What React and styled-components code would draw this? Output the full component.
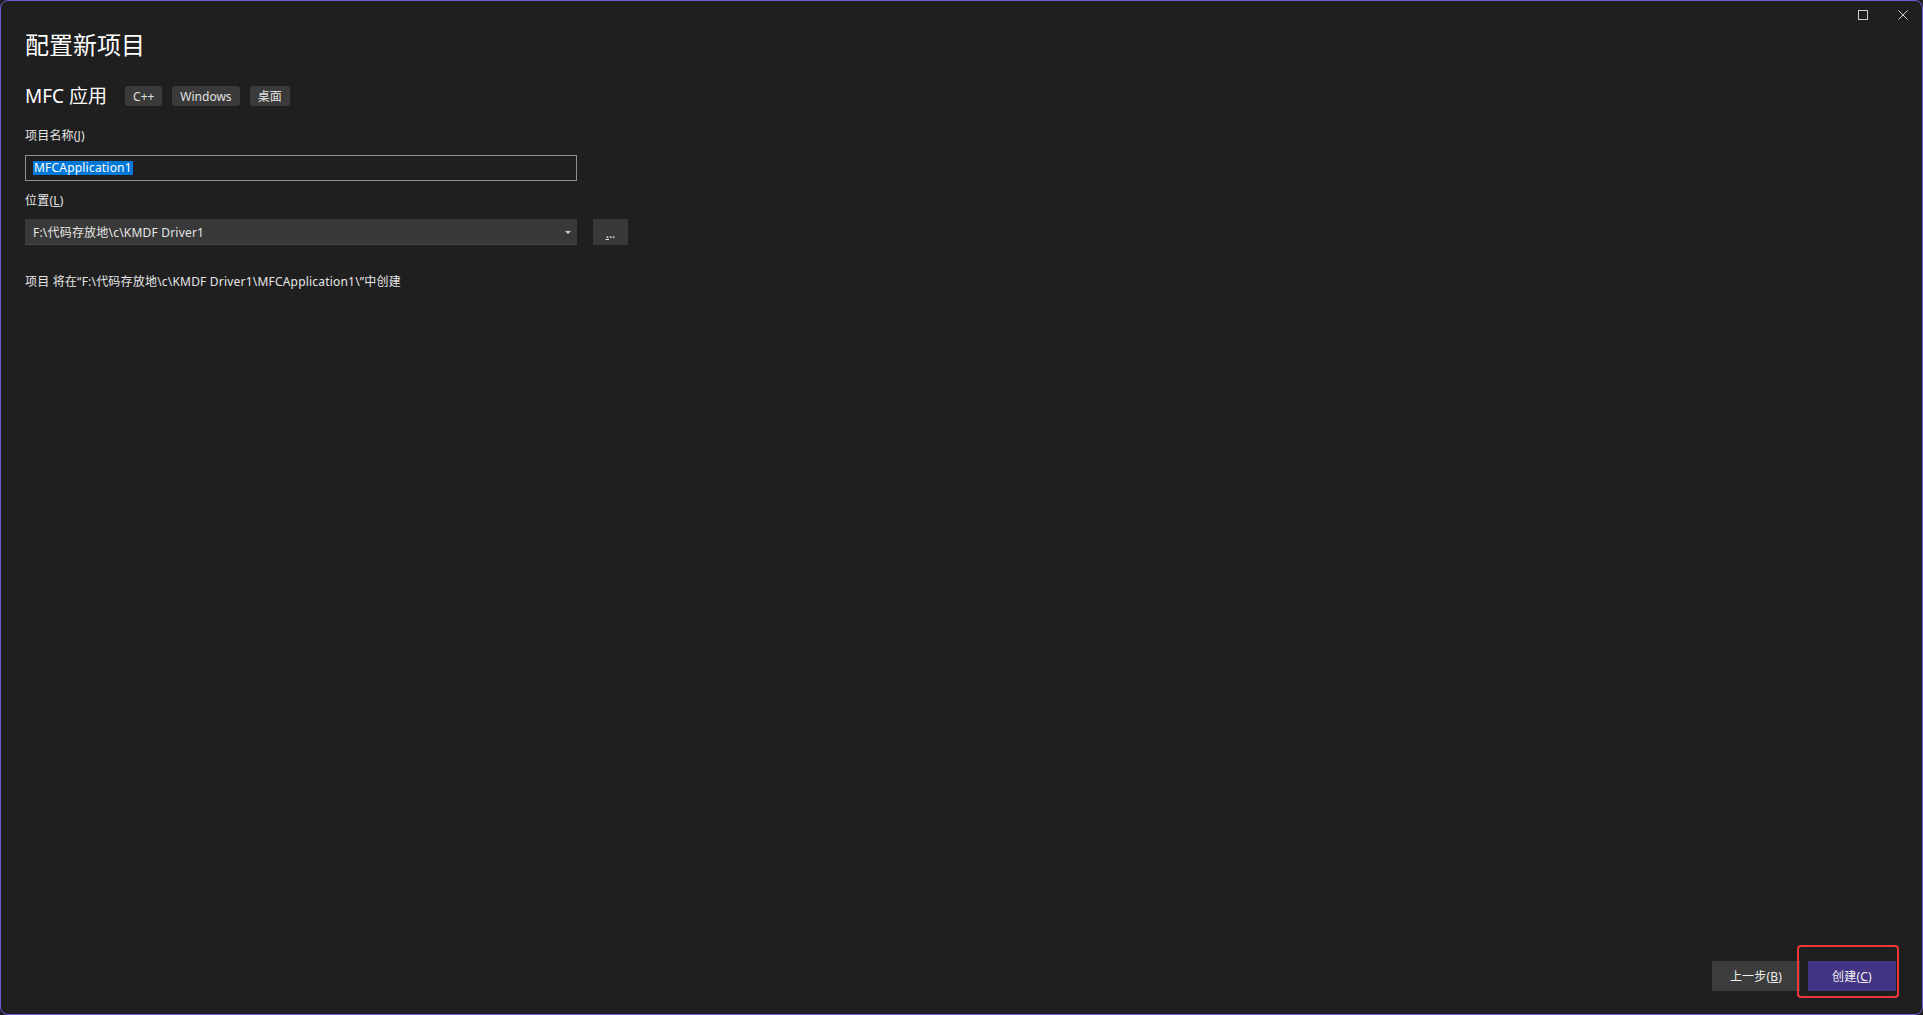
import React from "react";
import styled, { createGlobalStyle } from "styled-components";

const Global = createGlobalStyle`
  html, body { margin: 0; padding: 0; background: #1f1f1f; }
  body { font-family: "Noto Sans", "Noto Sans CJK SC", sans-serif; }
  #root { height: 100vh; }
`;

const Window = styled.div`
  box-sizing: border-box;
  width: 1923px;
  height: 1015px;
  border: 1px solid #6c5ce0;
  border-radius: 8px;
  background: #1f1f1f;
  display: flex;
  flex-direction: column;
  padding: 0 26px 23px 24px;
  color: #e6e6e6;
  overflow: hidden;
`;

const Chrome = styled.div`
  display: flex;
  justify-content: flex-end;
  align-items: flex-start;
  gap: 30px;
  height: 28px;
  padding-top: 9px;
  box-sizing: border-box;
  margin-right: -12px;
`;

const ChromeIcon = styled.svg`
  width: 10px;
  height: 10px;
  display: block;
`;

const Title = styled.h1`
  margin: 0;
  font-size: 24px;
  line-height: 32px;
  font-weight: 400;
  color: #ffffff;
`;

const SubRow = styled.div`
  display: flex;
  align-items: center;
  height: 20px;
  margin-top: 25px;
`;

const SubTitle = styled.div`
  font-size: 19px;
  line-height: 20px;
  color: #ffffff;
  margin-right: 18px;
`;

const Tag = styled.span`
  display: inline-flex;
  align-items: center;
  height: 20px;
  padding: 0 8px;
  border-radius: 3px;
  background: #3a3a3a;
  color: #e0e0e0;
  font-size: 12px;
  margin-right: 10px;
`;

const Label = styled.div`
  font-size: 12px;
  line-height: 16px;
  letter-spacing: 0.2px;
  color: #e6e6e6;
  margin-top: ${(p) => p.$mt}px;
`;

const TextBox = styled.div`
  box-sizing: border-box;
  width: 552px;
  height: 26px;
  margin-top: ${(p) => p.$mt}px;
  border: 1px solid #8f8f8f;
  display: flex;
  align-items: center;
  padding-left: 7px;
  font-size: 12px;
  letter-spacing: 0.2px;
`;

const Selected = styled.span`
  background: #0078d7;
  color: #ffffff;
  line-height: 14px;
  padding: 0 1px;
`;

const LocRow = styled.div`
  display: flex;
  gap: 16px;
  margin-top: 10px;
`;

const Select = styled.div`
  box-sizing: border-box;
  width: 552px;
  height: 26px;
  background: #393939;
  border-bottom: 1px solid #454545;
  display: flex;
  align-items: center;
  justify-content: space-between;
  padding: 0 6px 0 8px;
  font-size: 12px;
  letter-spacing: 0.2px;
  color: #e6e6e6;
`;

const Caret = styled.span`
  width: 0;
  height: 0;
  border-left: 3px solid transparent;
  border-right: 3px solid transparent;
  border-top: 3px solid #cfcfcf;
  margin-top: 1px;
`;

const BrowseButton = styled.button`
  box-sizing: border-box;
  width: 35px;
  height: 26px;
  border: none;
  background: #393939;
  color: #e6e6e6;
  font-family: inherit;
  font-size: 12px;
  line-height: 12px;
  padding: 0;
  padding-top: 3px;
`;

const PathNote = styled.div`
  font-size: 12px;
  line-height: 16px;
  letter-spacing: 0.2px;
  color: #e6e6e6;
  margin-top: 29px;
`;

const Spacer = styled.div`
  flex: 1;
`;

const Footer = styled.div`
  display: flex;
  justify-content: flex-end;
  gap: 8px;
`;

const Btn = styled.button`
  position: relative;
  width: 88px;
  height: 30px;
  border: none;
  background: ${(p) => (p.$primary ? "#433584" : "#3c3c3c")};
  color: #f0f0f0;
  font-family: inherit;
  font-size: 12px;
  letter-spacing: 0.2px;
  padding: 0;
`;

const Highlight = styled.span`
  position: absolute;
  left: -11px;
  top: -16px;
  right: -3px;
  bottom: -7px;
  border: 2px solid #e8383c;
  border-radius: 4px;
  pointer-events: none;
`;

export default function App() {
  return (
    <>
      <Global />
      <Window>
        <Chrome>
          <ChromeIcon viewBox="0 0 10 10">
            <rect x="0.5" y="0.5" width="9" height="9" fill="none" stroke="#cfcfcf" strokeWidth="1" />
          </ChromeIcon>
          <ChromeIcon viewBox="0 0 10 10">
            <path d="M0.5 0.5 L9.5 9.5 M9.5 0.5 L0.5 9.5" stroke="#cfcfcf" strokeWidth="1" />
          </ChromeIcon>
        </Chrome>
        <Title>配置新项目</Title>
        <SubRow>
          <SubTitle>MFC 应用</SubTitle>
          <Tag>C++</Tag>
          <Tag>Windows</Tag>
          <Tag>桌面</Tag>
        </SubRow>
        <Label $mt={22}>
          项目名称(<u>J</u>)
        </Label>
        <TextBox $mt={11}>
          <Selected>MFCApplication1</Selected>
        </TextBox>
        <Label $mt={12}>
          位置(<u>L</u>)
        </Label>
        <LocRow>
          <Select>
            <span>F:\代码存放地\c\KMDF Driver1</span>
            <Caret />
          </Select>
          <BrowseButton>
            <u>.</u>..
          </BrowseButton>
        </LocRow>
        <PathNote>项目 将在“F:\代码存放地\c\KMDF Driver1\MFCApplication1\”中创建</PathNote>
        <Spacer />
        <Footer>
          <Btn>
            上一步(<u>B</u>)
          </Btn>
          <Btn $primary>
            创建(<u>C</u>)
            <Highlight />
          </Btn>
        </Footer>
      </Window>
    </>
  );
}
